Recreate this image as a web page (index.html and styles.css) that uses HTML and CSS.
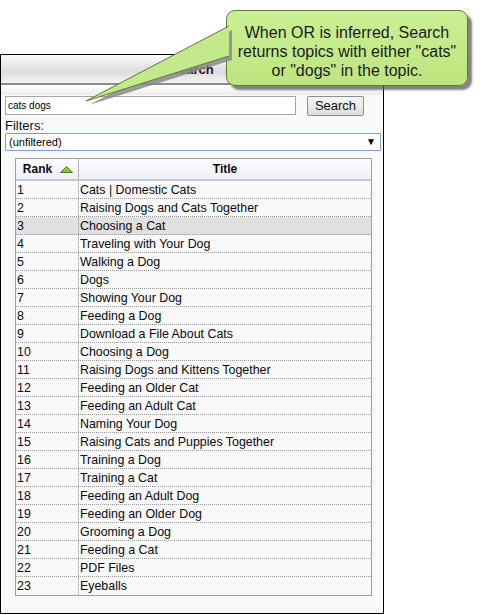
FILE: index.html
```html
<!DOCTYPE html>
<html>
<head>
<meta charset="utf-8">
<link rel="stylesheet" href="styles.css">
</head>
<body>
<div class="panel">
  <div class="panel-head">Search</div>
  <div class="panel-strip"></div>
  <div class="panel-body">
    <div class="search-row">
      <div class="search-input">cats dogs</div>
      <div class="search-btn">Search</div>
    </div>
    <div class="filters-label">Filters:</div>
    <div class="select"><span>(unfiltered)</span><span class="caret">▼</span></div>
    <div class="results">
      <div class="thead">
        <div class="th th-rank">Rank <svg class="sort" width="13" height="7" viewBox="0 0 13 7"><polygon points="6.5,0.5 12.5,6.5 0.5,6.5" fill="#8cc63f" stroke="#4d7a1a" stroke-width="1"/></svg></div>
        <div class="th th-title">Title</div>
      </div>
      <div class="row"><div class="c-rank">1</div><div class="c-title">Cats | Domestic Cats</div></div>
      <div class="row"><div class="c-rank">2</div><div class="c-title">Raising Dogs and Cats Together</div></div>
      <div class="row sel"><div class="c-rank">3</div><div class="c-title">Choosing a Cat</div></div>
      <div class="row"><div class="c-rank">4</div><div class="c-title">Traveling with Your Dog</div></div>
      <div class="row"><div class="c-rank">5</div><div class="c-title">Walking a Dog</div></div>
      <div class="row"><div class="c-rank">6</div><div class="c-title">Dogs</div></div>
      <div class="row"><div class="c-rank">7</div><div class="c-title">Showing Your Dog</div></div>
      <div class="row"><div class="c-rank">8</div><div class="c-title">Feeding a Dog</div></div>
      <div class="row"><div class="c-rank">9</div><div class="c-title">Download a File About Cats</div></div>
      <div class="row"><div class="c-rank">10</div><div class="c-title">Choosing a Dog</div></div>
      <div class="row"><div class="c-rank">11</div><div class="c-title">Raising Dogs and Kittens Together</div></div>
      <div class="row"><div class="c-rank">12</div><div class="c-title">Feeding an Older Cat</div></div>
      <div class="row"><div class="c-rank">13</div><div class="c-title">Feeding an Adult Cat</div></div>
      <div class="row"><div class="c-rank">14</div><div class="c-title">Naming Your Dog</div></div>
      <div class="row"><div class="c-rank">15</div><div class="c-title">Raising Cats and Puppies Together</div></div>
      <div class="row"><div class="c-rank">16</div><div class="c-title">Training a Dog</div></div>
      <div class="row"><div class="c-rank">17</div><div class="c-title">Training a Cat</div></div>
      <div class="row"><div class="c-rank">18</div><div class="c-title">Feeding an Adult Dog</div></div>
      <div class="row"><div class="c-rank">19</div><div class="c-title">Feeding an Older Dog</div></div>
      <div class="row"><div class="c-rank">20</div><div class="c-title">Grooming a Dog</div></div>
      <div class="row"><div class="c-rank">21</div><div class="c-title">Feeding a Cat</div></div>
      <div class="row"><div class="c-rank">22</div><div class="c-title">PDF Files</div></div>
      <div class="row last"><div class="c-rank">23</div><div class="c-title">Eyeballs</div></div>
    </div>
  </div>
</div>

<div class="callout">When OR is inferred, Search returns topics with either "cats" or "dogs" in the topic.</div>
<svg class="tail" width="240" height="120" viewBox="0 0 240 120">
  <polygon points="232,30 89,105 232,60" fill="#8a8a8a" opacity="0.85"/>
  <polygon points="229,26 86,101 229,56" fill="#c3e98a"/>
  <polyline points="229,26 86,101 229,56" fill="none" stroke="#5d7a34" stroke-width="1"/>
</svg>
</body>
</html>
```

FILE: styles.css
```css
html, body {
  margin: 0;
  padding: 0;
  background: #ffffff;
}
body {
  width: 482px;
  height: 615px;
  overflow: hidden;
  font-family: "Liberation Sans", Arial, sans-serif;
  position: relative;
}
.panel {
  margin-top: 54px;
  width: 384px;
  height: 560px;
  box-sizing: border-box;
  border: 1px solid #000;
  background: #f9f9f9;
}
.panel-head {
  height: 30px;
  border-bottom: 2px solid #8c8c8c;
  background: linear-gradient(#fbfbfb, #e6e6e6 40%, #dcdcdc 60%, #f4f4f4);
  font-size: 13px;
  font-weight: bold;
  color: #1a1a1a;
  display: flex;
  align-items: center;
  justify-content: center;
  padding-top: 1px;
  box-sizing: border-box;
}
.panel-strip {
  height: 10px;
  background: linear-gradient(#ffffff, #ececec);
}
.panel-body {
  padding: 1px 0 0 4px;
}
.search-row {
  display: flex;
  align-items: flex-start;
  height: 20px;
}
.search-input {
  width: 291px;
  height: 19px;
  box-sizing: border-box;
  border: 1px solid #a5a5a5;
  background: #fff;
  font-size: 10px;
  line-height: 17px;
  padding-left: 2px;
  color: #000;
}
.search-btn {
  margin-left: 11px;
  width: 57px;
  height: 20px;
  box-sizing: border-box;
  border: 1px solid #8e8e8e;
  border-radius: 2px;
  background: linear-gradient(#f6f6f6, #dedede);
  font-size: 13px;
  line-height: 18px;
  text-align: center;
  color: #111;
}
.filters-label {
  font-size: 13px;
  height: 15px;
  line-height: 15px;
  margin-top: 2px;
  color: #111;
}
.select {
  width: 376px;
  height: 18px;
  box-sizing: border-box;
  border: 1px solid #7f9dd6;
  border-radius: 1px;
  background: #fff;
  font-size: 11px;
  line-height: 16px;
  padding: 0 4px 0 3px;
  display: flex;
  justify-content: space-between;
  color: #000;
}
.caret {
  font-size: 10px;
}
.results {
  margin: 7px 0 0 10px;
  width: 357px;
  box-sizing: border-box;
  border: 1px solid #a0a0a0;
  background: #f9f9f9;
  font-size: 12.4px;
  color: #0a0a14;
}
.thead {
  display: flex;
  height: 22px;
  box-sizing: border-box;
  border-bottom: 2px solid #c8c8d0;
  background: linear-gradient(#fbfcff, #eef1f8);
  font-weight: bold;
  font-size: 12px;
}
.th {
  display: flex;
  align-items: center;
  justify-content: center;
}
.th-rank {
  width: 63px;
  border-right: 1px solid #b4b4b4;
  gap: 8px;
  padding-left: 2px;
  box-sizing: border-box;
}
.sort {
  display: block;
}
.th-title {
  flex: 1;
}
.row {
  display: flex;
  height: 18px;
  box-sizing: border-box;
  border-bottom: 1px dotted #999;
  line-height: 18px;
}
.row.last {
  border-bottom: none;
}
.row.sel {
  background: #e0e0e0;
}
.c-rank {
  width: 63px;
  box-sizing: border-box;
  padding-left: 1px;
  border-right: 1px dotted #999;
}
.c-title {
  flex: 1;
  padding-left: 1px;
}
.callout {
  position: absolute;
  left: 226px;
  top: 10px;
  width: 242px;
  height: 76px;
  box-sizing: border-box;
  border: 1px solid #5d7a34;
  border-radius: 9px;
  background: linear-gradient(#cbef95, #bde57f);
  box-shadow: 4px 4px 2px rgba(90, 90, 90, 0.75);
  font-size: 16px;
  line-height: 19px;
  text-align: center;
  color: #1c1c1c;
  padding: 12px 8px 0;
}
.tail {
  position: absolute;
  left: 0;
  top: 0;
}
```
